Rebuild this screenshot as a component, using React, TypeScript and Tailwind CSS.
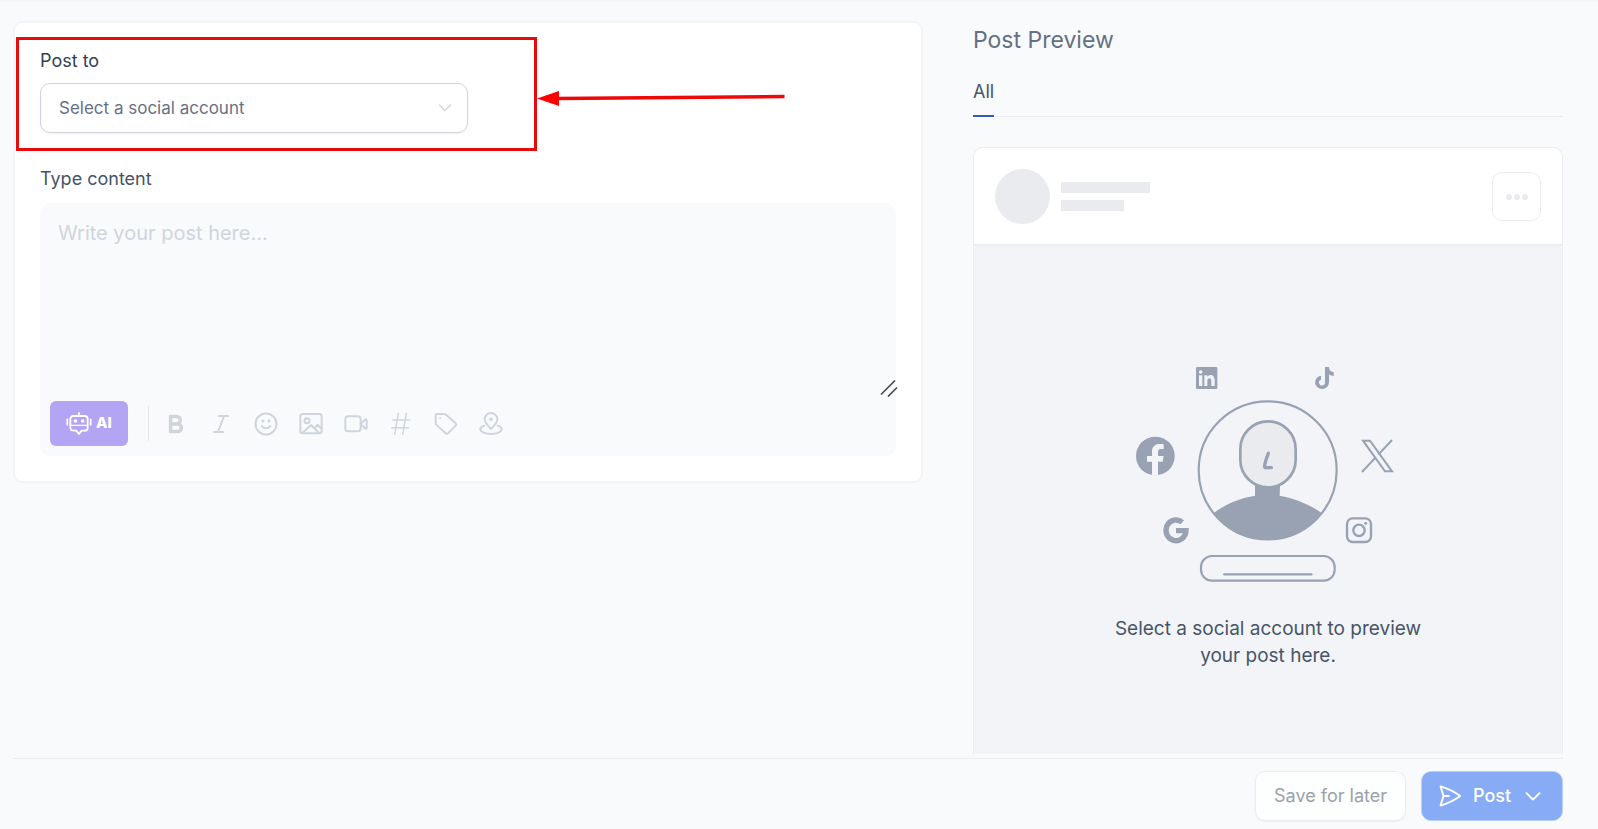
import type { ReactNode } from "react";
import { RiBold } from "react-icons/ri";
import { Italic } from "lucide-react";

function ToolButton({ label, children }: { label: string; children: ReactNode }) {
  return (
    <button
      type="button"
      aria-label={label}
      className="flex h-[45px] w-[45px] items-center justify-center text-[#d0d5dd]"
    >
      {children}
    </button>
  );
}

function ToolIcon({ children }: { children: ReactNode }) {
  return (
    <svg
      className="h-6 w-6"
      viewBox="0 0 72 72"
      fill="none"
      stroke="currentColor"
      strokeWidth="6"
      strokeLinecap="round"
      strokeLinejoin="round"
    >
      {children}
    </svg>
  );
}

function RobotIcon() {
  return (
    <svg
      className="h-6 w-[26px]"
      viewBox="0 0 78 72"
      fill="none"
      stroke="currentColor"
      strokeWidth="5.5"
      strokeLinecap="round"
      strokeLinejoin="round"
    >
      <path d="M39 3v9M4 22v16M74 22v16" />
      <path d="M22 12h34a9 9 0 0 1 9 9v26a9 9 0 0 1-9 9H47l-8 10-8-10H22a9 9 0 0 1-9-9V21a9 9 0 0 1 9-9z" />
      <path d="M13 40h52" strokeWidth="4" />
      <circle cx="28" cy="27" r="5.5" fill="currentColor" stroke="none" />
      <circle cx="50" cy="27" r="5.5" fill="currentColor" stroke="none" />
    </svg>
  );
}

function Toolbar() {
  return (
    <div className="flex items-center px-[10px] pb-[10px]">
      <button
        type="button"
        className="flex h-[45px] w-[78px] items-center justify-center gap-1 rounded-md bg-[#b4a5f4] text-[15px] font-extrabold text-white"
      >
        <RobotIcon />
        AI
      </button>
      <div className="mr-1 ml-5 h-[35px] w-px bg-gray-200" />
      <ToolButton label="Bold">
        <RiBold className="h-[26px] w-[26px] stroke-current stroke-[1.3]" />
      </ToolButton>
      <ToolButton label="Italic">
        <Italic className="h-6 w-6" />
      </ToolButton>
      <ToolButton label="Emoji">
        <ToolIcon>
          <circle cx="36" cy="36" r="31.5" />
          <path d="M23 42c6 9 20 9 26 0" />
          <circle cx="27" cy="27" r="4.5" fill="currentColor" stroke="none" />
          <circle cx="45" cy="27" r="4.5" fill="currentColor" stroke="none" />
        </ToolIcon>
      </ToolButton>
      <ToolButton label="Image">
        <ToolIcon>
          <rect x="4" y="6" width="64" height="58" rx="7" />
          <circle cx="24" cy="26" r="7.5" />
          <path d="M10 63l26-24 24 24M47 48l9-10 11 12" />
        </ToolIcon>
      </ToolButton>
      <ToolButton label="Video">
        <ToolIcon>
          <rect x="4" y="13" width="46" height="45" rx="9" />
          <path d="M50 35l13-12c3-2 5-1 5 2v22c0 3-2 4-5 2L50 37" />
        </ToolIcon>
      </ToolButton>
      <ToolButton label="Hashtag">
        <ToolIcon>
          <path d="M28 4L17 67M52 4L41 67M12 24h51M8 47h51" strokeWidth="4.5" />
        </ToolIcon>
      </ToolButton>
      <ToolButton label="Tag">
        <ToolIcon>
          <path d="M10 6h20c3 0 5 1 7 3l28 25c2 2 2 5 0 7L42 64c-2 2-5 2-7 0L7 38c-2-2-2-4-2-6V11c0-3 2-5 5-5z" />
          <circle cx="19" cy="19" r="3" fill="currentColor" stroke="none" />
        </ToolIcon>
      </ToolButton>
      <ToolButton label="Location">
        <ToolIcon>
          <path d="M36 51C27 42 17 33 17 22a19 19 0 0 1 38 0c0 11-10 20-19 29z" />
          <circle cx="36" cy="22" r="5.5" fill="currentColor" stroke="none" />
          <path d="M15 41C8 43 4 47 4 51c0 9 15 15 32 15s32-6 32-15c0-4-4-8-11-10" />
        </ToolIcon>
      </ToolButton>
    </div>
  );
}

// Red frame and arrow pointing at the account picker
function Callout() {
  return (
    <>
      <div className="pointer-events-none absolute -top-3 -left-6 h-[114px] w-[521px] border-[3px] border-[#e60c0c]" />
      <svg
        className="pointer-events-none absolute top-[40px] left-[497px] h-[18px] w-[250px]"
        viewBox="0 0 250 18"
      >
        <path d="M20 9.5L247.5 7.5" stroke="#ee0808" strokeWidth="3.5" />
        <path d="M0 9.5L22 2v15z" fill="#ff0000" />
      </svg>
    </>
  );
}

function Composer() {
  return (
    <section className="self-start rounded-[10px] border-2 border-gray-100 bg-white px-[25px] pt-[26px] pb-[25px]">
      <div className="relative">
        <label htmlFor="account" className="block text-lg leading-6 text-[#344054]">
          Post to
        </label>
        <div className="relative mt-[10px] w-1/2">
          <select
            id="account"
            className="h-[50px] w-full appearance-none rounded-[10px] border border-[#d0d5dd] bg-white px-[18px] pt-[2px] text-[17px] text-[#667085] shadow-xs"
          >
            <option>Select a social account</option>
          </select>
          <svg
            className="pointer-events-none absolute top-[21px] right-[16px] h-2 w-[14px]"
            viewBox="0 0 14 8"
            fill="none"
            stroke="#d0d5dd"
            strokeWidth="1.5"
            strokeLinecap="round"
          >
            <path d="M1.500 1l5.500 5.500 5.500-5.500" />
          </svg>
        </div>
        <Callout />
      </div>

      <label htmlFor="content" className="mt-[34px] block text-lg leading-6 text-[#475467]">
        Type content
      </label>
      <div className="relative mt-3 rounded-[10px] bg-[#f9fafc]">
        <textarea
          id="content"
          placeholder="Write your post here..."
          className="block h-[198px] w-full resize-none bg-transparent px-[18px] py-4 text-xl placeholder:text-[#d0d5dd]"
        />
        <svg
          className="pointer-events-none absolute top-[176px] -right-[2px] h-[18px] w-[18px]"
          viewBox="0 0 18 18"
          stroke="#45484d"
          strokeWidth="1.6"
        >
          <path d="M1 15.500L15 1.500M8 17.500l9-9" />
        </svg>
        <Toolbar />
      </div>
    </section>
  );
}

function Illustration() {
  return (
    <svg className="h-[217px] w-[268px]" viewBox="72 48 804 651" fill="none">
      <circle cx="473" cy="361" r="207" stroke="#98a2b3" strokeWidth="6.5" />
      <path
        d="M435 405h75l-1 32c46 8 91 27 126 52a207 207 0 0 1-324 0c36-27 79-45 124-52z"
        fill="#98a2b3"
      />
      <rect x="391" y="214" width="166" height="198" rx="83" fill="#e9ebef" stroke="#98a2b3" strokeWidth="8" />
      <path
        d="M475 310c-5 14-10 25-11 37-1 5 1 6 5 6h15"
        stroke="#98a2b3"
        strokeWidth="10"
        strokeLinecap="round"
      />
      <rect x="273" y="618" width="401" height="74" rx="33" stroke="#98a2b3" strokeWidth="6.5" />
      <path d="M343 673h261" stroke="#98a2b3" strokeWidth="7" strokeLinecap="round" />

      {/* LinkedIn */}
      <g transform="translate(258 51)">
        <rect width="64" height="66" rx="4" fill="#98a2b3" />
        <circle cx="14" cy="15" r="5.5" fill="#f2f4f8" />
        <path
          d="M9 25h10v32H9zM25 25h9v4c7-9 22-6 22 9v19H46V41c0-10-12-10-12 0v16h-9z"
          fill="#f2f4f8"
        />
      </g>

      {/* TikTok */}
      <path
        d="M645 51h12c0 9 6 15 14 15v12c-5 0-10-2-14-5v24a21 20 0 1 1-24-20v12a9 9 0 1 0 12 8z"
        fill="#98a2b3"
      />

      {/* Facebook */}
      <circle cx="136" cy="318" r="58" fill="#98a2b3" />
      <path
        d="M126 376v-41h-15v-17h15v-13c0-15 9-23 23-23 5 0 9 0 12 1v14h-8c-7 0-9 4-9 9v12h17l-3 17h-14v41z"
        fill="#f2f4f8"
      />

      {/* X */}
      <path d="M759 272h21l66 92h-21zM846 270l-41 44M756 366l41-44" stroke="#98a2b3" strokeWidth="6" />

      {/* Google */}
      <path d="M217 517a30 31 0 1 0 11 25h-30" stroke="#98a2b3" strokeWidth="16" />

      {/* Instagram */}
      <rect x="711" y="505" width="72" height="71" rx="17" stroke="#98a2b3" strokeWidth="7" />
      <circle cx="747" cy="541" r="17" stroke="#98a2b3" strokeWidth="7" />
      <circle cx="767" cy="520" r="4.5" fill="#98a2b3" />
    </svg>
  );
}

function Preview() {
  return (
    <section className="flex flex-col">
      <h2 className="mt-[3px] text-[23px] leading-8 text-[#667085]">Post Preview</h2>
      <div role="tablist" className="mt-6 flex shadow-[inset_0_-1px_0_#eaecf0]">
        <button
          type="button"
          role="tab"
          aria-selected="true"
          className="border-b-2 border-[#2f5fb3] pb-[11px] text-lg leading-6 text-[#475467]"
        >
          All
        </button>
      </div>

      <div className="mt-[30px] flex flex-1 flex-col overflow-hidden rounded-t-[10px] border border-b-0 border-[#eaecf0] bg-[#f2f4f8]">
        <div className="flex items-center gap-[11px] border-b-2 border-[#eaecf0] bg-white px-[21px] pt-[21px] pb-5">
          <div className="h-[55px] w-[55px] rounded-full bg-[#e9ebef]" />
          <div className="flex flex-col gap-[7px]">
            <div className="h-[11px] w-[89px] bg-[#e9ebef]" />
            <div className="h-[11px] w-[63px] bg-[#e9ebef]" />
          </div>
          <button
            type="button"
            aria-label="More options"
            className="ml-auto flex h-[49px] w-[49px] items-center justify-center gap-[2px] rounded-[10px] border border-[#eaecf0]"
          >
            <span className="h-[6px] w-[6px] rounded-full bg-[#e9ebef]" />
            <span className="h-[6px] w-[6px] rounded-full bg-[#e9ebef]" />
            <span className="h-[6px] w-[6px] rounded-full bg-[#e9ebef]" />
          </button>
        </div>
        <div className="flex flex-1 flex-col items-center pt-[120px]">
          <Illustration />
          <p className="mt-8 w-[340px] text-center text-[19px] leading-[27px] text-[#475467]">
            Select a social account to preview your post here.
          </p>
        </div>
      </div>
    </section>
  );
}

function Footer() {
  return (
    <footer className="mt-1 flex justify-end gap-[15px] border-t border-[#eaecf0] pt-3 pb-2">
      <button
        type="button"
        className="h-[50px] rounded-[10px] border border-[#eaecf0] bg-[#fdfefe] px-[18px] text-lg text-[#9ba1ab] shadow-xs"
      >
        Save for later
      </button>
      <button
        type="button"
        className="flex h-[50px] w-[142px] items-center rounded-[10px] border border-[#b9d0fb] bg-[#88abf5] pl-[15px] text-lg font-medium text-white"
      >
        <svg
          className="h-[26px] w-[26px]"
          viewBox="0 0 24 24"
          fill="none"
          stroke="currentColor"
          strokeWidth="1.7"
          strokeLinecap="round"
          strokeLinejoin="round"
        >
          <path d="M6 12L3.269 3.125A59.769 59.769 0 0 1 21.485 12 59.768 59.768 0 0 1 3.270 20.875L5.999 12zm0 0h5" />
        </svg>
        <span className="ml-[10px]">Post</span>
        <svg
          className="ml-[14px] h-[9px] w-4"
          viewBox="0 0 16 9"
          fill="none"
          stroke="currentColor"
          strokeWidth="1.9"
          strokeLinecap="round"
          strokeLinejoin="round"
        >
          <path d="M1.500 1.200L8 7.700l6.500-6.500" />
        </svg>
      </button>
    </footer>
  );
}

export default function App() {
  return (
    <div className="flex min-h-screen flex-col border-t-2 border-[#f5f6f8] bg-[#f9fafc] pr-[35px] pl-[13px] font-['Inter',sans-serif]">
      <main className="grid flex-1 grid-cols-[91fr_59fr] gap-[50px] pt-[19px]">
        <Composer />
        <Preview />
      </main>
      <Footer />
    </div>
  );
}
